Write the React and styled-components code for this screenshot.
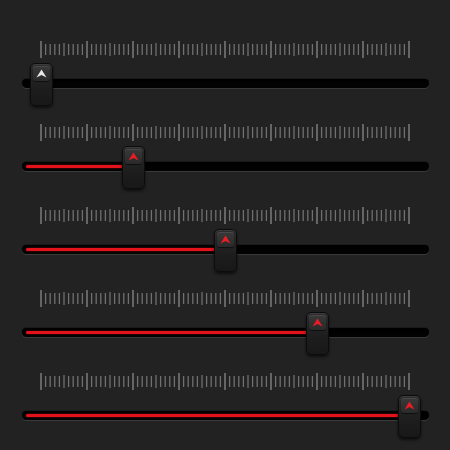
import styled, { createGlobalStyle } from "styled-components";

const GlobalStyle = createGlobalStyle`
  html, body {
    margin: 0;
    padding: 0;
    background: #222222;
    font-family: "Liberation Sans", Arial, sans-serif;
  }
  body {
    width: 450px;
    height: 450px;
    overflow: hidden;
  }
`;

const SCALE_START = 41;
const SCALE_WIDTH = 368;
const TICKS = 80;

const Page = styled.div`
  display: flex;
  flex-direction: column;
  width: 450px;
  height: 450px;
`;

const Row = styled.div`
  display: flex;
  flex-direction: column;
  padding-top: 41px;
  flex-shrink: 0;
`;

const Scale = styled.svg`
  display: block;
  flex-shrink: 0;
  margin-left: ${SCALE_START - 1}px;
  width: ${SCALE_WIDTH + 2}px;
  height: 17px;
`;

const Rail = styled.div`
  position: relative;
  flex-shrink: 0;
  height: 25px;
`;

const Track = styled.div`
  position: relative;
  margin: 21px 21px 0 22px;
  height: 9px;
  border-radius: 5px;
  background: #020202;
  box-shadow: inset 0 2px 2px rgba(0, 0, 0, 0.9), 0 1px 0 #3a3a3a,
    0 -1px 0 #1a1a1a;
`;

const Fill = styled.div`
  position: absolute;
  left: 4px;
  top: 3px;
  height: 3px;
  border-radius: 2px;
  background: #e3121b;
  box-shadow: 0 0 2px rgba(255, 20, 30, 0.5);
`;

const Thumb = styled.div`
  position: absolute;
  top: 5px;
  width: 23px;
  height: 43px;
  box-sizing: border-box;
  border-radius: 5px;
  border: 1px solid #0c0c0c;
  background: linear-gradient(#2c2c2c, #1d1d1d 60%, #181818);
  box-shadow: 0 2px 3px rgba(0, 0, 0, 0.6), inset 0 1px 0 #3c3c3c;
  padding: 2px;
  z-index: 1;
`;

const Cap = styled.div`
  display: flex;
  justify-content: center;
  padding-top: 3px;
  height: 15px;
  box-sizing: border-box;
  border-radius: 3px;
  background: linear-gradient(#383838, #2a2a2a);
  box-shadow: inset 0 1px 0 #484848, 0 1px 1px rgba(0, 0, 0, 0.6);
`;

const ArrowIcon = ({ color }) => (
  <svg width="11" height="9" viewBox="0 0 11 9">
    <path d="M5.5 0.5 L10.5 8.5 L5.5 6 L0.5 8.5 Z" fill={color} />
  </svg>
);

const Ticks = () => {
  const lines = [];
  for (let i = 0; i <= TICKS; i++) {
    const x = 1 + (i * SCALE_WIDTH) / TICKS;
    const major = i % 10 === 0;
    const mid = i % 5 === 0;
    const y1 = major ? 0 : mid ? 2 : 3;
    const y2 = major ? 17 : mid ? 15 : 14;
    lines.push(
      <line
        key={i}
        x1={x}
        x2={x}
        y1={y1}
        y2={y2}
        stroke={major ? "#8a8a8a" : "#707070"}
        strokeWidth="1.3"
      />
    );
  }
  return (
    <Scale viewBox={`0 0 ${SCALE_WIDTH + 2} 17`}>{lines}</Scale>
  );
};

const Slider = ({ value }) => {
  const center = SCALE_START + (SCALE_WIDTH * value) / 100;
  return (
    <Row>
      <Ticks />
      <Rail>
        <Track>
          {value > 0 && <Fill style={{ width: center - 26 }} />}
        </Track>
        <Thumb style={{ left: center - 11.5 }}>
          <Cap>
            <ArrowIcon color={value > 0 ? "#ec1c24" : "#e8e8e8"} />
          </Cap>
        </Thumb>
      </Rail>
    </Row>
  );
};

const values = [0, 25, 50, 75, 100];

export default function App() {
  return (
    <Page>
      <GlobalStyle />
      {values.map((v) => (
        <Slider key={v} value={v} />
      ))}
    </Page>
  );
}
